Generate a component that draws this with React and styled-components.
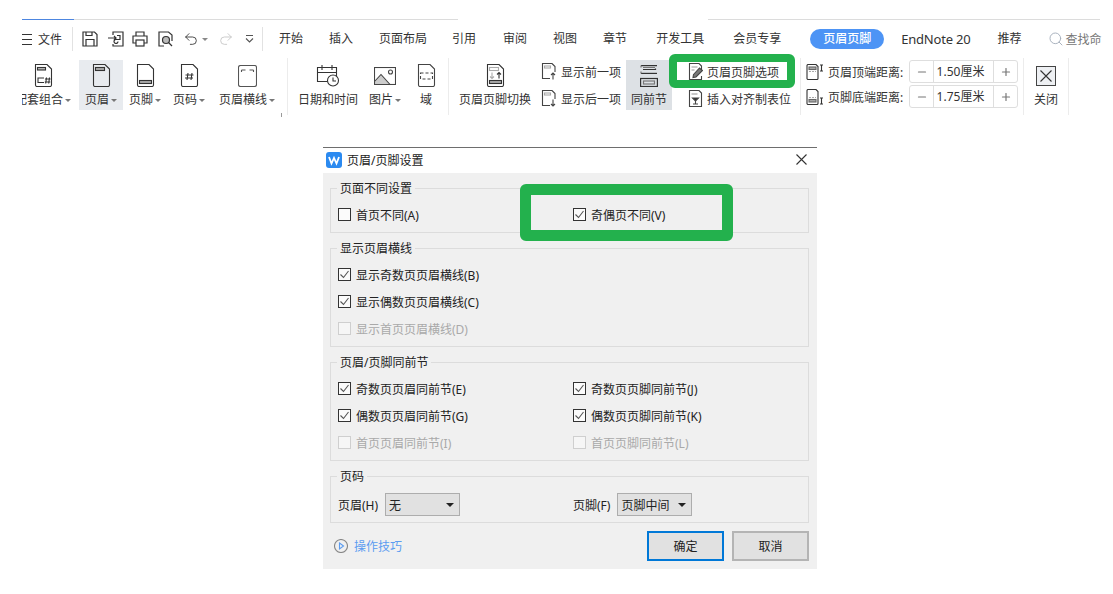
import React from 'react';
import styled, { createGlobalStyle } from 'styled-components';
import { Minus, Plus, Search, Undo2, Redo2 } from 'lucide-react';

const Global = createGlobalStyle`
  html, body { margin: 0; padding: 0; background: #fff; }
  body {
    font-family: "Noto Sans", "Noto Sans CJK SC", sans-serif;
    font-size: 12px;
    color: #333;
  }
`;

const Page = styled.div`
  width: 1113px;
  height: 594px;
  overflow: hidden;
  padding-top: 19px;
  box-sizing: border-box;
`;

/* window chrome line at the very top */
const TopStrip = styled.div`
  display: flex;
  margin-left: 22px;
  height: 1px;
`;
const StripPart = styled.div`
  width: ${p => p.$w}px;
  background: ${p => p.$c};
`;

/* tab row */
const TabRow = styled.div`
  display: flex;
  align-items: center;
  height: 38px;
  padding-left: 22px;
`;
const MenuIcon = styled.span`
  display: block;
  width: 10px;
  height: 9px;
  border-top: 1px solid #333;
  border-bottom: 1px solid #333;
  position: relative;
  margin-right: 6px;
  &::after {
    content: "";
    position: absolute;
    left: 0;
    right: 0;
    top: 4px;
    height: 1px;
    background: #333;
  }
`;
const VBar = styled.span`
  width: 1px;
  height: 24px;
  background: #e2e2e2;
  margin-left: ${p => p.$ml}px;
`;
const Qat = styled.span`
  display: flex;
  margin-left: ${p => p.$ml}px;
  color: ${p => p.$c || '#333'};
`;
const SmallCaret = styled.span`
  display: inline-block;
  width: 0;
  height: 0;
  border: 3px solid transparent;
  border-top: 3px solid ${p => p.$c || '#777'};
  border-bottom: 0;
  margin-left: ${p => p.$ml ?? 2}px;
`;
const Tab = styled.span`
  margin-left: ${p => p.$ml}px;
  white-space: nowrap;
  line-height: 20px;
  font-size: ${p => (p.$latin ? '13px' : '12px')};
  letter-spacing: ${p => (p.$latin ? '-0.2px' : '0')};
`;
const ActiveTab = styled.span`
  margin-left: 29px;
  width: 74px;
  height: 20px;
  line-height: 20px;
  text-align: center;
  color: #fff;
  border-radius: 10px;
  background: #4d94f5;
  font-weight: 500;
`;
const SearchBox = styled.span`
  display: flex;
  align-items: center;
  margin-left: 27px;
  color: #777;
  gap: 1px;
  svg { color: #a4adba; }
`;

/* ribbon */
const Ribbon = styled.div`
  position: relative;
  display: flex;
  height: 50px;
  margin: 2px 0 0 22px;
`;
const Item = styled.div`
  width: ${p => p.$w}px;
  flex: none;
  display: flex;
  flex-direction: column;
  align-items: ${p => (p.$clip ? 'flex-start' : 'center')};
  overflow: hidden;
  background: ${p => p.$bg || 'transparent'};
`;
const IconSlot = styled.div`
  height: 31px;
  display: flex;
  align-items: center;
  justify-content: center;
  flex: none;
  margin-left: ${p => p.$ml || 0}px;
`;
const Label = styled.div`
  display: flex;
  align-items: center;
  white-space: nowrap;
  line-height: 16px;
  margin: 1px 0 0 ${p => p.$ml || 0}px;
`;
const Sep = styled.div`
  position: relative;
  flex: none;
  width: 1px;
  height: 57px;
  margin: -2px ${p => p.$mr || 0}px 0 ${p => p.$ml || 0}px;
  background: #ececec;
  &::before {
    content: "";
    display: ${p => (p.$tick ? 'block' : 'none')};
    position: absolute;
    left: -6px;
    top: 55px;
    width: 1px;
    height: 4px;
    background: #999;
  }
`;
const Stack = styled.div`
  width: ${p => p.$w}px;
  flex: none;
  display: flex;
  flex-direction: column;
  justify-content: center;
  height: 50px;
`;
const StackRow = styled.div`
  display: flex;
  align-items: center;
  height: 27px;
  flex: none;
  padding-left: ${p => p.$pl || 0}px;
  gap: ${p => p.$gap}px;
  white-space: nowrap;
`;
const DistStack = styled.div`
  width: 222px;
  flex: none;
  display: flex;
  flex-direction: column;
  gap: 2px;
`;
const DistRow = styled.div`
  display: flex;
  align-items: center;
  height: 23px;
  padding-left: 5px;
  white-space: nowrap;
`;
const DistLabel = styled.span`
  margin-left: 5px;
  width: 81px;
`;
const Stepper = styled.div`
  display: flex;
  width: 109px;
  height: 23px;
  box-sizing: border-box;
  border: 1px solid #dedede;
  border-radius: 3px;
  align-items: center;
`;
const StepBtn = styled.span`
  width: 23px;
  flex: none;
  display: flex;
  justify-content: center;
  color: #777;
`;
const StepValue = styled.span`
  flex: 1;
  height: 100%;
  line-height: 21px;
  text-align: center;
  padding-right: 6px;
  border-left: 1px solid #dedede;
  border-right: 1px solid #dedede;
`;
const CloseBox = styled.div`
  width: 20px;
  height: 20px;
  box-sizing: border-box;
  border: 1px solid #444;
  background: #eef0f3;
  display: flex;
  align-items: center;
  justify-content: center;
`;
const Highlight = styled.div`
  position: absolute;
  box-sizing: border-box;
  left: ${p => p.$x}px;
  top: ${p => p.$y}px;
  width: ${p => p.$w}px;
  height: ${p => p.$h}px;
  border: ${p => p.$b}px solid #23b14d;
  border-radius: 6px;
  pointer-events: none;
`;

/* dialog */
const Dialog = styled.div`
  position: relative;
  width: 494px;
  margin: 37px 0 0 323px;
  border-top: 1px solid #6e6e6e;
  color: #222;
`;
const TitleBar = styled.div`
  display: flex;
  align-items: center;
  height: 25px;
  box-sizing: border-box;
  padding: 0 10px 2px 3px;
  background: #fff;
`;
const Title = styled.span`
  flex: 1;
  margin-left: 5px;
`;
const DialogBody = styled.div`
  display: flex;
  flex-direction: column;
  gap: 7px;
  padding: 7px 8px 8px 7px;
  background: #f0f0f0;
`;
const Group = styled.fieldset`
  margin: 0;
  padding: 0;
  height: ${p => p.$h}px;
  box-sizing: border-box;
  border: 1px solid #dcdcdc;
  min-width: 0;
`;
const Legend = styled.legend`
  margin-left: 6px;
  padding: 2px 3px 0;
  line-height: 14px;
  color: #222;
`;
const Rows = styled.div`
  display: grid;
  grid-template-columns: 235px 1fr;
  grid-auto-rows: 27px;
  padding: ${p => p.$pt ?? 5}px 0 0 7px;
`;
const CheckRow = styled.label`
  display: flex;
  align-items: center;
  gap: 5px;
  grid-column: ${p => p.$col || 'auto'};
  color: ${p => (p.$off ? '#a9a9a9' : '#222')};
  white-space: nowrap;
`;
const Box = styled.span`
  width: 13px;
  height: 13px;
  box-sizing: border-box;
  flex: none;
  border: 1px solid ${p => (p.$off ? '#cfcfcf' : '#333')};
  background: ${p => (p.$off ? '#f6f6f6' : '#fbfbfb')};
  display: flex;
  align-items: center;
  justify-content: center;
`;
const PickerRow = styled.div`
  display: flex;
  align-items: center;
  gap: 7px;
  white-space: nowrap;
`;
const Picker = styled.div`
  width: 75px;
  height: 23px;
  box-sizing: border-box;
  border: 1px solid #adadad;
  background: #e1e1e1;
  display: flex;
  align-items: center;
  justify-content: space-between;
  padding: 0 5px 0 3px;
  &::after {
    content: "";
    border: 4px solid transparent;
    border-top: 4px solid #222;
    border-bottom: 0;
  }
`;
const Footer = styled.div`
  display: flex;
  align-items: center;
  height: 30px;
  margin-top: 1px;
  padding-left: 4px;
`;
const TipLink = styled.span`
  display: flex;
  align-items: center;
  gap: 6px;
  flex: 1;
  color: #5b9cf0;
`;
const Btn = styled.button`
  width: 77px;
  height: 30px;
  margin-left: 8px;
  padding: 0;
  box-sizing: border-box;
  font: inherit;
  color: #222;
  background: #e1e1e1;
  border: 2px solid ${p => (p.$primary ? '#0078d7' : '#b4b4b4')};
`;

/* icons */
const Svg = ({ w, h, children, c = '#333', sw = 1.1 }) => (
  <svg width={w} height={h} viewBox={`0 0 ${w} ${h}`} fill="none" stroke={c} strokeWidth={sw}>
    {children}
  </svg>
);
const docPath = 'M1.5.5H13L17.5 5V21a1.5 1.5 0 0 1-1.5 1.5H3A1.5 1.5 0 0 1 1.5 21Z';
const Doc = ({ children }) => (
  <Svg w={19} h={23}>
    <path d={docPath} />
    {children}
  </Svg>
);
const IconCombo = () => (
  <Doc>
    <rect x="3.5" y="3.5" width="8" height="2.5" fill="#bbb" />
    <path d="M10 14H4v4.5h6M12.5 13.5l-.8 6M15.5 13.5l-.8 6M11 15h5.5M10.8 18h5.5" />
  </Doc>
);
const IconHeader = () => (
  <Doc>
    <rect x="3.5" y="3.5" width="9" height="3" fill="#aaa" />
  </Doc>
);
const IconFooter = () => (
  <Doc>
    <rect x="3.5" y="16.5" width="12" height="3" fill="#aaa" />
  </Doc>
);
const IconPageNo = () => (
  <Doc>
    <path d="M8 9l-1 7M12 9l-1 7M5.5 11h8M5 14h8" />
  </Doc>
);
const IconHeaderLine = () => (
  <Svg w={19} h={22} c="#555">
    <rect x=".5" y=".5" width="18" height="21" rx="2" />
    <path d="M3.5 5h4M11.5 5h4M3.5 5v2M15.5 5v2" />
  </Svg>
);
const IconDate = () => (
  <Svg w={24} h={23}>
    <path d="M13 17.5H1.5V3.5h19v9M1.5 8.5h19M6 1v5M16 1v5" />
    <circle cx="17" cy="16.5" r="5.5" fill="#fff" />
    <path d="M17 13.5v3.5h3" />
  </Svg>
);
const IconPicture = () => (
  <Svg w={22} h={18} c="#444">
    <rect x=".5" y=".5" width="21" height="17" />
    <path d="M.5 14.5L7 7.5l9 10H.5Z" fill="#ccc" />
    <circle cx="16.5" cy="5" r="2" />
  </Svg>
);
const IconField = () => (
  <Svg w={19} h={23} c="#444">
    <path d={docPath} />
    <rect x="3.5" y="9" width="12" height="6" strokeDasharray="3 2" />
  </Svg>
);
const IconSwitch = () => (
  <Svg w={19} h={23}>
    <path d={docPath} />
    <rect x="3.5" y="3.5" width="9" height="3" stroke="#aaa" />
    <path d="M6 8.5v6M4 12.5l2 2 2-2" stroke="#aaa" />
    <path d="M13 14.5v-6M11 10.5l2-2 2 2" />
    <rect x="3.5" y="16.5" width="12" height="3" fill="#aaa" />
  </Svg>
);
const IconPrev = () => (
  <Svg w={16} h={17} c="#444">
    <path d="M9 15.5H1.5V.5H11l3 3V9" />
    <rect x="3.5" y="3" width="6" height="2" stroke="#aaa" />
    <path d="M12 16.5V10M10 12l2-2 2 2" />
  </Svg>
);
const IconNext = () => (
  <Svg w={16} h={17} c="#444">
    <path d="M9 15.5H1.5V.5H11l3 3V9" />
    <rect x="3.5" y="3" width="6" height="2" stroke="#aaa" />
    <path d="M12 9.5V16M10 14l2 2 2-2" />
  </Svg>
);
const IconLink = () => (
  <Svg w={18} h={22} sw={1.2}>
    <path d="M1 .6h16M3 4.500h12.500v-1" stroke="#333" />
    <path d="M1 8.400h16" />
    <path d="M3 2.500h12M1 .6v2M1 6.500v2" stroke="#777" />
    <rect x=".6" y="13.500" width="16.800" height="8" />
    <rect x="3.500" y="16" width="11" height="3" stroke="#777" />
  </Svg>
);
const IconOptions = () => (
  <Svg w={15} h={17} c="#444">
    <path d="M13.500 7V3L11 .5H1.500V16.500H13.500V13" />
    <path d="M3.500 4h6M3.500 7h3" stroke="#999" />
    <path d="M5.500 11.500L11.500 5l3 2.500-6.500 6.500-3 .5Z" fill="#777" />
  </Svg>
);
const IconTabStop = () => (
  <Svg w={15} h={17} c="#444">
    <path d="M1.500.5H11L13.500 3V16.500H1.500Z" />
    <path d="M3.500 4h6" stroke="#999" />
    <path d="M4.500 8h6L7.500 11ZM7.500 11v3M5 14h5" fill="#333" />
  </Svg>
);
const IconTopDist = () => (
  <Svg w={17} h={16}>
    <path d="M1 1.500a1 1 0 0 1 1-1H10L12 2.500V14.500a1 1 0 0 1-1 1H2a1 1 0 0 1-1-1Z" />
    <rect x="3" y="3" width="7" height="2.500" fill="#aaa" stroke="#666" />
    <path d="M3 7.500h7" stroke="#aaa" strokeDasharray="2 1" />
    <path d="M14 1h3M15.500 1v6M14 7h3" />
  </Svg>
);
const IconBottomDist = () => (
  <Svg w={17} h={16}>
    <path d="M1 1.500a1 1 0 0 1 1-1H10L12 2.500V14.500a1 1 0 0 1-1 1H2a1 1 0 0 1-1-1Z" />
    <rect x="3" y="10.500" width="7" height="2.500" fill="#aaa" stroke="#666" />
    <path d="M3 8.500h7" stroke="#aaa" strokeDasharray="2 1" />
    <path d="M14 9h3M15.500 9v6M14 15h3" />
  </Svg>
);
const IconSave = () => (
  <Svg w={16} h={16} sw={1.2}>
    <path d="M1 1h11.500L15 3.500V15H1Z" />
    <path d="M4 15V8.500h8V15M4 1v3.500h6V1" />
  </Svg>
);
const IconExport = () => (
  <Svg w={16} h={16} sw={1.2}>
    <path d="M5 4V1h10v14H5v-2" />
    <path d="M0 7h8M6 5l2 2-2 2" />
    <path d="M9 4.500h3v4H8.500a2 2 0 1 0 1.500 2" />
  </Svg>
);
const IconPrint = () => (
  <Svg w={16} h={16} sw={1.2}>
    <path d="M4 5V1h8v4M4 12H1V5h14v7h-3" />
    <rect x="4" y="9" width="8" height="6" />
  </Svg>
);
const IconPreview = () => (
  <Svg w={15} h={16} sw={1.2}>
    <path d="M6 15H1V1h9.500L14 4v6" />
    <circle cx="8" cy="9" r="3.500" fill="#bbb" />
    <path d="M10.500 11.500L14 15" />
  </Svg>
);
const IconMore = () => (
  <Svg w={9} h={8} c="#555">
    <path d="M1 .5h7M1 3.500l3.500 3.500L8 3.500" />
  </Svg>
);
const Cross = ({ s, c = '#333' }) => (
  <Svg w={s} h={s} c={c}>
    <path d={`M.5 .5L${s - 0.5} ${s - 0.5}M${s - 0.5} .5L.5 ${s - 0.5}`} />
  </Svg>
);
const Logo = () => (
  <svg width="16" height="16" viewBox="0 0 16 16">
    <rect width="16" height="16" rx="3" fill="#2b8af0" />
    <path d="M3 5l2.500 6.500L8 6l2.500 5.500L13 5" fill="none" stroke="#fff" strokeWidth="1.800" />
  </svg>
);
const PlayIcon = () => (
  <Svg w={14} h={14} c="#888">
    <circle cx="7" cy="7" r="6.500" />
    <path d="M5.500 4l4 3-4 3Z" stroke="#5b9cf0" />
  </Svg>
);

const Check = ({ label, on, off, col }) => (
  <CheckRow $off={off} $col={col}>
    <Box $off={off}>
      {on && (
        <svg width="11" height="11" viewBox="0 0 11 11" fill="none" stroke="#555" strokeWidth="1.100">
          <path d="M1.500 5.500l3 3 5-6.500" />
        </svg>
      )}
    </Box>
    {label}
  </CheckRow>
);

const tabs = [
  ['开始', 16],
  ['插入', 26],
  ['页面布局', 26],
  ['引用', 25],
  ['审阅', 27],
  ['视图', 26],
  ['章节', 26],
  ['开发工具', 29],
  ['会员专享', 29],
];

const App = () => (
  <Page>
    <Global />
    <TopStrip>
      <StripPart $w={52} $c="#4d86e0" />
      <StripPart $w={384} $c="#dcdcdc" />
      <StripPart $w={250} $c="transparent" />
      <StripPart $w={392} $c="#dcdcdc" />
    </TopStrip>

    <TabRow>
      <MenuIcon />
      文件
      <VBar $ml={10} />
      <Qat $ml={9}><IconSave /></Qat>
      <Qat $ml={10}><IconExport /></Qat>
      <Qat $ml={8}><IconPrint /></Qat>
      <Qat $ml={10}><IconPreview /></Qat>
      <Qat $ml={10}><Undo2 size={16} strokeWidth={1.3} /></Qat>
      <SmallCaret $c="#888" $ml={3} />
      <Qat $ml={10} $c="#c4c4c4"><Redo2 size={16} strokeWidth={1.3} /></Qat>
      <Qat $ml={11}><IconMore /></Qat>
      <VBar $ml={8} />
      {tabs.map(([t, ml], i) => (
        <Tab key={i} $ml={ml}>{t}</Tab>
      ))}
      <ActiveTab>页眉页脚</ActiveTab>
      <Tab $ml={17} $latin>EndNote 20</Tab>
      <Tab $ml={27}>推荐</Tab>
      <SearchBox>
        <Search size={16} strokeWidth={1.4} />
        查找命
      </SearchBox>
    </TabRow>

    <Ribbon>
      <Item $w={57} $clip>
        <IconSlot $ml={12}><IconCombo /></IconSlot>
        <Label $ml={-7}>配套组合<SmallCaret /></Label>
      </Item>
      <Item $w={44} $bg="#e8ebef">
        <IconSlot><IconHeader /></IconSlot>
        <Label>页眉<SmallCaret /></Label>
      </Item>
      <Item $w={44}>
        <IconSlot><IconFooter /></IconSlot>
        <Label>页脚<SmallCaret /></Label>
      </Item>
      <Item $w={44}>
        <IconSlot><IconPageNo /></IconSlot>
        <Label>页码<SmallCaret /></Label>
      </Item>
      <Item $w={72}>
        <IconSlot><IconHeaderLine /></IconSlot>
        <Label>页眉横线<SmallCaret /></Label>
      </Item>
      <Sep $ml={4} $mr={4} $tick />
      <Item $w={72}>
        <IconSlot><IconDate /></IconSlot>
        <Label>日期和时间</Label>
      </Item>
      <Item $w={42}>
        <IconSlot><IconPicture /></IconSlot>
        <Label>图片<SmallCaret /></Label>
      </Item>
      <Item $w={40}>
        <IconSlot><IconField /></IconSlot>
        <Label>域</Label>
      </Item>
      <Sep $ml={2} />
      <Item $w={92}>
        <IconSlot><IconSwitch /></IconSlot>
        <Label>页眉页脚切换</Label>
      </Item>
      <Stack $w={85}>
        <StackRow $gap={4}><IconPrev />显示前一项</StackRow>
        <StackRow $gap={4}><IconNext />显示后一项</StackRow>
      </Stack>
      <Item $w={46} $bg="#dde1e5">
        <IconSlot><IconLink /></IconSlot>
        <Label>同前节</Label>
      </Item>
      <Stack $w={128}>
        <StackRow $pl={16} $gap={4}><IconOptions />页眉页脚选项</StackRow>
        <StackRow $pl={16} $gap={4}><IconTabStop />插入对齐制表位</StackRow>
      </Stack>
      <Sep />
      <DistStack>
        <DistRow>
          <IconTopDist />
          <DistLabel>页眉顶端距离:</DistLabel>
          <Stepper>
            <StepBtn><Minus size={12} strokeWidth={2.4} /></StepBtn>
            <StepValue>1.50厘米</StepValue>
            <StepBtn><Plus size={12} strokeWidth={2.4} /></StepBtn>
          </Stepper>
        </DistRow>
        <DistRow>
          <IconBottomDist />
          <DistLabel>页脚底端距离:</DistLabel>
          <Stepper>
            <StepBtn><Minus size={12} strokeWidth={2.4} /></StepBtn>
            <StepValue>1.75厘米</StepValue>
            <StepBtn><Plus size={12} strokeWidth={2.4} /></StepBtn>
          </Stepper>
        </DistRow>
      </DistStack>
      <Sep />
      <Item $w={44}>
        <IconSlot><CloseBox><Cross s={12} /></CloseBox></IconSlot>
        <Label>关闭</Label>
      </Item>
      <Sep />
      <Highlight $x={647} $y={-6} $w={126} $h={34} $b={8} />
    </Ribbon>

    <Dialog>
      <TitleBar>
        <Logo />
        <Title>页眉/页脚设置</Title>
        <Cross s={11} />
      </TitleBar>
      <DialogBody>
        <Group $h={53}>
          <Legend>页面不同设置</Legend>
          <Rows>
            <Check label="首页不同(A)" />
            <Check label="奇偶页不同(V)" on />
          </Rows>
        </Group>
        <Group $h={107}>
          <Legend>显示页眉横线</Legend>
          <Rows>
            <Check col="1 / 3" label="显示奇数页页眉横线(B)" on />
            <Check col="1 / 3" label="显示偶数页页眉横线(C)" on />
            <Check col="1 / 3" label="显示首页页眉横线(D)" off />
          </Rows>
        </Group>
        <Group $h={107}>
          <Legend>页眉/页脚同前节</Legend>
          <Rows>
            <Check label="奇数页页眉同前节(E)" on />
            <Check label="奇数页页脚同前节(J)" on />
            <Check label="偶数页页眉同前节(G)" on />
            <Check label="偶数页页脚同前节(K)" on />
            <Check label="首页页眉同前节(I)" off />
            <Check label="首页页脚同前节(L)" off />
          </Rows>
        </Group>
        <Group $h={55}>
          <Legend>页码</Legend>
          <Rows $pt={7}>
            <PickerRow>页眉(H)<Picker>无</Picker></PickerRow>
            <PickerRow>页脚(F)<Picker>页脚中间</Picker></PickerRow>
          </Rows>
        </Group>
        <Footer>
          <TipLink><PlayIcon />操作技巧</TipLink>
          <Btn $primary>确定</Btn>
          <Btn>取消</Btn>
        </Footer>
      </DialogBody>
      <Highlight $x={197} $y={36} $w={213} $h={57} $b={11} />
    </Dialog>
  </Page>
);

export default App;
